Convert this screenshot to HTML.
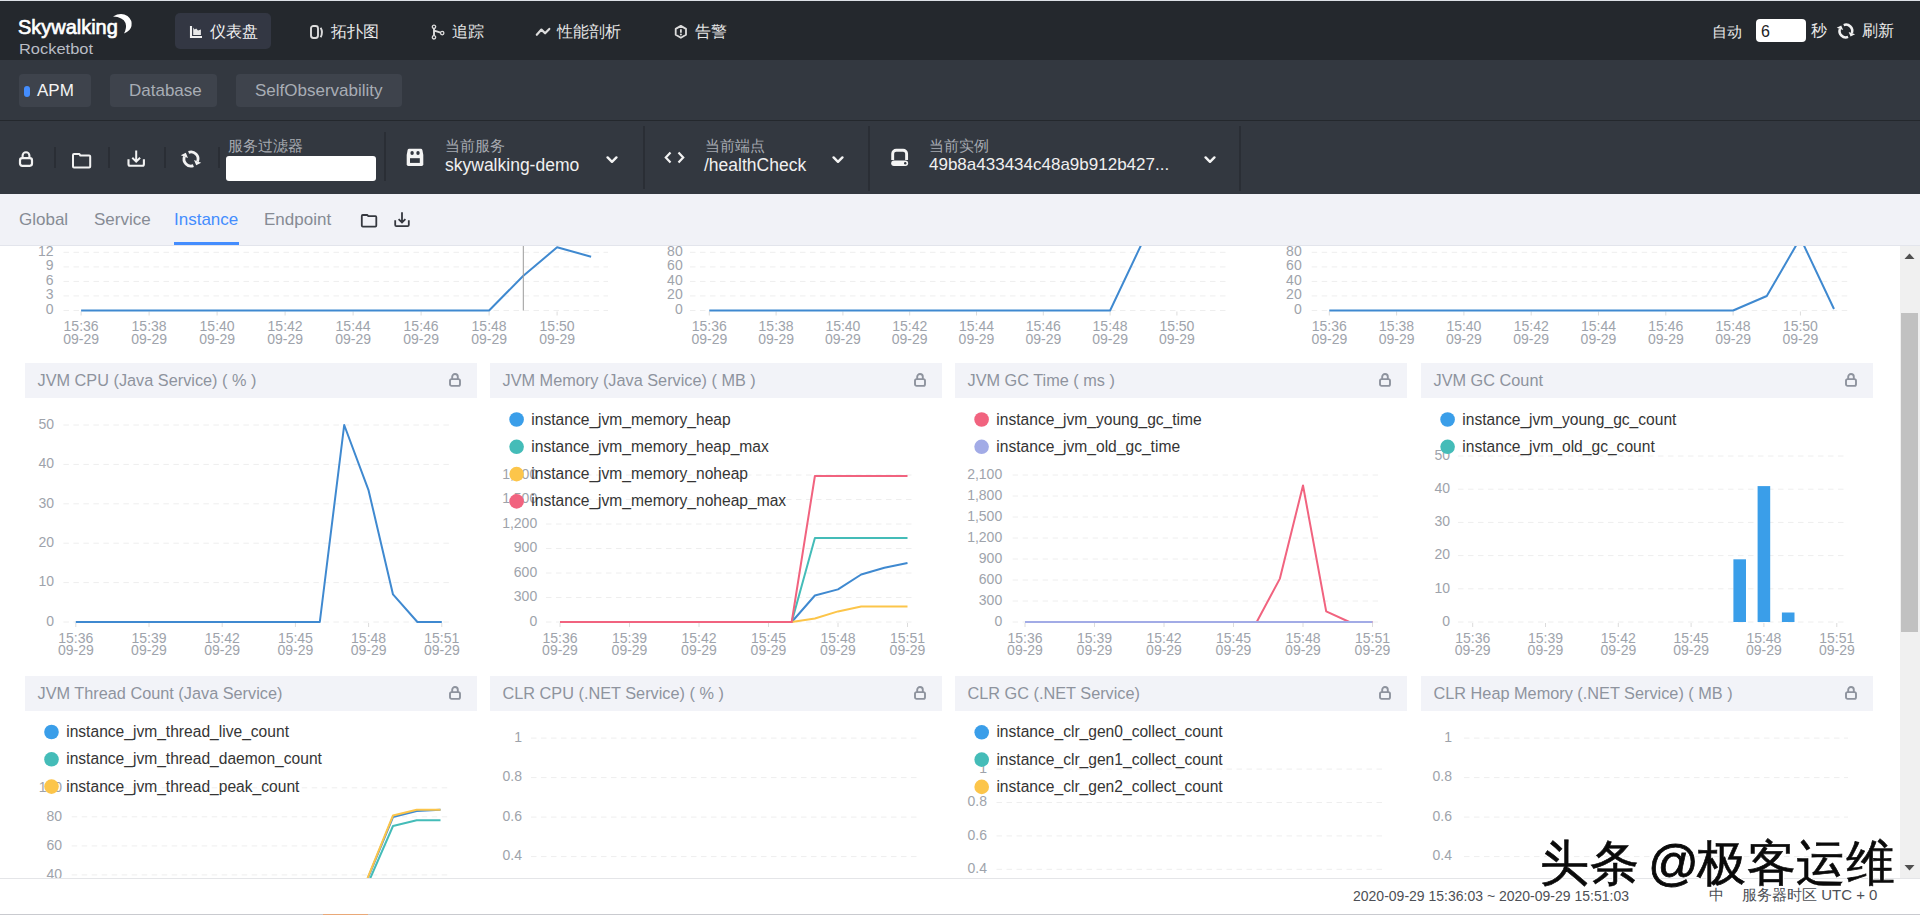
<!DOCTYPE html>
<html><head><meta charset="utf-8">
<style>
*{box-sizing:border-box}
html,body{margin:0;padding:0}
body{width:1920px;height:915px;overflow:hidden;position:relative;background:#fff;font-family:"Liberation Sans",sans-serif}
.a{position:absolute;white-space:nowrap}
#top{position:absolute;left:0;top:0;width:1920px;height:60px;background:#24282d}
#topline{position:absolute;left:0;top:0;width:1920px;height:1px;background:#dde1e6}
#bar2{position:absolute;left:0;top:60px;width:1920px;height:61px;background:#333840;border-bottom:1px solid #24282d}
#tool{position:absolute;left:0;top:121px;width:1920px;height:73px;background:#333840}
#tabs{position:absolute;left:0;top:194px;width:1920px;height:52px;background:#f1f2f7;border-bottom:1px solid #e3e5ec}
.nav{color:#e6e6e6;font-size:16px;line-height:16px;top:24px}
.mtab{top:74px;height:33px;border-radius:4px;background:#3e434c;color:#a8adb5;font-size:17px;line-height:33px}
.sep{position:absolute;width:2px;background:#2a2e35}
.lbl{color:#a6aab1;font-size:15px;line-height:15px}
.val{color:#f0f0f0;font-size:17.5px;line-height:18px;margin-top:1px}
.ttab{top:211px;font-size:17px;line-height:17px;color:#868b94}
#foot{position:absolute;left:0;top:878px;width:1920px;height:37px;background:#fff;border-top:1px solid #e4e5e8;border-bottom:1px solid #c9cacf}
</style></head>
<body>
<div id="top"></div><div id="topline"></div>
<div class="a" style="left:18px;top:15px;color:#fff;font-size:21px;line-height:23px;font-weight:normal;-webkit-text-stroke:0.7px #fff;transform-origin:0 0;transform:scaleX(0.95)">Skywalking</div>
<svg class="a" style="left:108px;top:11px" width="26" height="26" viewBox="0 0 26 26"><path d="M5 5.5Q13 1 19.5 5Q24.5 9 23.5 15Q22.5 20 16 22.5Q19 17 17.5 12Q15 6 5 5.5Z" fill="#fff"/></svg>
<div class="a" style="left:19px;top:42px;color:#b9bdc5;font-size:14.3px;line-height:15px;transform-origin:0 0;transform:scaleX(1.15)">Rocketbot</div>
<div class="a" style="left:175px;top:13px;width:96px;height:36px;border-radius:5px;background:#333743"></div>
<svg class="a" style="left:189px;top:25px" width="14" height="14" viewBox="0 0 14 14"><path d="M2 1V12H13" stroke="#f0f0f0" stroke-width="2.1" fill="none"/><path d="M4.2 10V2.6L5.6 4.6L7.2 3.6L9 5.6L11.9 4.6V10Z" fill="#e8e8e8"/></svg>
<div class="a nav" style="left:210px;color:#f2f2f2">仪表盘</div>
<svg class="a" style="left:309px;top:25px" width="16" height="15" viewBox="0 0 16 15"><rect x="2" y="1" width="7" height="12" rx="2.4" stroke="#dcdcdc" stroke-width="1.9" fill="none"/><path d="M11.6 2.7Q14.4 7.2 11.6 12.2" stroke="#dcdcdc" stroke-width="1.9" fill="none"/></svg>
<div class="a nav" style="left:331px">拓扑图</div>
<svg class="a" style="left:430px;top:24px" width="16" height="16" viewBox="0 0 16 16"><circle cx="4" cy="2.8" r="1.7" stroke="#dcdcdc" stroke-width="1.3" fill="none"/><circle cx="4" cy="13.3" r="1.7" stroke="#dcdcdc" stroke-width="1.3" fill="none"/><circle cx="12.2" cy="9.1" r="1.7" stroke="#dcdcdc" stroke-width="1.3" fill="none"/><path d="M4 4.4V11.7M4.3 6.6L10.6 8.7" stroke="#dcdcdc" stroke-width="1.9" fill="none"/></svg>
<div class="a nav" style="left:452px">追踪</div>
<svg class="a" style="left:535px;top:25px" width="16" height="14" viewBox="0 0 16 14"><path d="M1.8 9.8L6.4 4.6L10.1 8.3L14.3 3.9" stroke="#dcdcdc" stroke-width="2.2" fill="none" stroke-linecap="round" stroke-linejoin="round"/></svg>
<div class="a nav" style="left:557px">性能剖析</div>
<svg class="a" style="left:673px;top:24px" width="16" height="16" viewBox="0 0 16 16"><path d="M7.85 1.9L13 4.9V10.8L7.85 13.8L2.7 10.8V4.9Z" stroke="#dcdcdc" stroke-width="1.8" fill="none" stroke-linejoin="round"/><path d="M7.9 5.2V8.7" stroke="#dcdcdc" stroke-width="1.8"/><circle cx="7.9" cy="10.5" r="1" fill="#dcdcdc"/></svg>
<div class="a nav" style="left:695px">告警</div>
<div class="a" style="left:1712px;top:24px;color:#eaeaea;font-size:14.5px;line-height:16px">自动</div>
<div class="a" style="left:1756px;top:19px;width:50px;height:23px;border-radius:4px;background:#fff;color:#222;font-size:16px;line-height:25px;padding-left:5px">6</div>
<div class="a" style="left:1811px;top:23px;color:#eaeaea;font-size:16px;line-height:16px">秒</div>
<svg class="a" style="left:1836px;top:22px" width="19.8" height="18.0" viewBox="0 0 22 20"><path d="M8.6 3.4A7 7 0 0 1 17.6 12.4M13.4 16.6A7 7 0 0 1 4.4 7.6" stroke="#f0f0f0" stroke-width="2.8" fill="none"/><path d="M21.2 13.7L14 11.1L16.2 16.2Z M0.8 6.3L8 8.9L5.8 3.8Z" fill="#f0f0f0"/></svg>
<div class="a" style="left:1862px;top:23px;color:#eaeaea;font-size:15.5px;line-height:16px">刷新</div>

<div id="bar2"></div>
<div class="a mtab" style="left:19px;width:72px;color:#f4f4f4;padding-left:18px">APM</div>
<div class="a" style="left:24px;top:86px;width:6px;height:11px;border-radius:3px;background:#448dfe"></div>
<div class="a mtab" style="left:110px;width:107px;padding-left:19px">Database</div>
<div class="a mtab" style="left:236px;width:166px;padding-left:19px">SelfObservability</div>

<div id="tool"></div>
<svg class="a" style="left:18px;top:150px" width="16" height="18" viewBox="0 0 16 18"><path d="M4.6 8.3V5.6a3.4 3.4 0 0 1 6.8 0V8.3" stroke="#f2f2f2" stroke-width="2.1" fill="none"/><rect x="2" y="8.2" width="12" height="7.6" rx="2.2" stroke="#f2f2f2" stroke-width="2.2" fill="none"/></svg>
<div class="sep" style="left:54px;top:147px;height:21px"></div>
<svg class="a" style="left:71px;top:152px" width="21" height="17" viewBox="0 0 21 17"><path d="M2 14.6V3Q2 2 3 2H8.4L9.4 3.6H18.2Q19.2 3.6 19.2 4.6V14.6Q19.2 15.6 18.2 15.6H3Q2 15.6 2 14.6Z" stroke="#f2f2f2" stroke-width="2" fill="none" stroke-linejoin="round"/></svg>
<div class="sep" style="left:108px;top:147px;height:21px"></div>
<svg class="a" style="left:126px;top:149px" width="20" height="19" viewBox="0 0 20 19"><path d="M2.5 10.3V15.2Q2.5 16.7 4 16.7H16.4Q17.9 16.7 17.9 15.2V10.3" stroke="#f2f2f2" stroke-width="2.1" fill="none"/><path d="M10.2 1.4V12.6M6.3 8.8L10.2 12.6L14.1 8.8" stroke="#f2f2f2" stroke-width="2" fill="none"/></svg>
<div class="sep" style="left:164px;top:147px;height:21px"></div>
<svg class="a" style="left:180px;top:149px" width="22.0" height="20.0" viewBox="0 0 22 20"><path d="M8.6 3.4A7 7 0 0 1 17.6 12.4M13.4 16.6A7 7 0 0 1 4.4 7.6" stroke="#f2f2f2" stroke-width="2.8" fill="none"/><path d="M21.2 13.7L14 11.1L16.2 16.2Z M0.8 6.3L8 8.9L5.8 3.8Z" fill="#f2f2f2"/></svg>
<div class="sep" style="left:218px;top:147px;height:21px"></div>
<div class="a lbl" style="left:228px;top:138px">服务过滤器</div>
<div class="a" style="left:226px;top:156px;width:150px;height:25px;border-radius:3px;background:#fff"></div>
<div class="sep" style="left:384px;top:132px;height:49px"></div>
<svg class="a" style="left:406px;top:148px" width="18" height="19" viewBox="0 0 18 19"><path d="M3.2 0.7H14.8Q16 0.7 16.4 2L17.3 7V16.3Q17.3 17.9 15.7 17.9H2.3Q0.7 17.9 0.7 16.3V7L1.6 2Q2 0.7 3.2 0.7Z" fill="#f4f4f4"/><ellipse cx="6.1" cy="5" rx="1.7" ry="2" fill="#333840"/><ellipse cx="12" cy="5" rx="1.7" ry="2" fill="#333840"/><rect x="4" y="10.2" width="9.8" height="4.7" fill="#333840"/></svg>
<div class="a lbl" style="left:445px;top:138px">当前服务</div>
<div class="a val" style="left:445px;top:155px">skywalking-demo</div>
<svg class="a" style="left:605px;top:154px" width="13" height="10" viewBox="0 0 13 10"><path d="M2.6 3.4L7 7.8L11.4 3.4" stroke="#f4f4f4" stroke-width="2.4" fill="none" stroke-linecap="round" stroke-linejoin="round"/></svg>
<div class="sep" style="left:643px;top:126px;height:63px"></div>
<svg class="a" style="left:664px;top:151px" width="21" height="13" viewBox="0 0 21 13"><path d="M6.5 1.5L1.8 6.5L6.5 11.5M14.5 1.5L19.2 6.5L14.5 11.5" stroke="#f2f2f2" stroke-width="2.2" fill="none"/></svg>
<div class="a lbl" style="left:705px;top:138px">当前端点</div>
<div class="a val" style="left:704px;top:155px">/healthCheck</div>
<svg class="a" style="left:831px;top:154px" width="13" height="10" viewBox="0 0 13 10"><path d="M2.6 3.4L7 7.8L11.4 3.4" stroke="#f4f4f4" stroke-width="2.4" fill="none" stroke-linecap="round" stroke-linejoin="round"/></svg>
<div class="sep" style="left:868px;top:126px;height:65px"></div>
<svg class="a" style="left:889px;top:148px" width="21" height="20" viewBox="0 0 21 20"><path d="M3.7 12V5.8A3.5 3.5 0 0 1 7.2 2.3H14.1A3.5 3.5 0 0 1 17.6 5.8V12" stroke="#f4f4f4" stroke-width="2.9" fill="none"/><rect x="2.2" y="12.6" width="16.9" height="5.4" rx="2.7" fill="#f4f4f4"/><circle cx="16.2" cy="15.2" r="1.2" fill="#333840"/></svg>
<div class="a lbl" style="left:929px;top:138px">当前实例</div>
<div class="a val" style="left:929px;top:155px;font-size:17px">49b8a433434c48a9b912b427...</div>
<svg class="a" style="left:1203px;top:154px" width="13" height="10" viewBox="0 0 13 10"><path d="M2.6 3.4L7 7.8L11.4 3.4" stroke="#f4f4f4" stroke-width="2.4" fill="none" stroke-linecap="round" stroke-linejoin="round"/></svg>
<div class="sep" style="left:1239px;top:126px;height:65px"></div>
<div id="tabs"></div>
<div class="a ttab" style="left:19px">Global</div>
<div class="a ttab" style="left:94px">Service</div>
<div class="a ttab" style="left:174px;color:#448dfe">Instance</div>
<div class="a" style="left:174px;top:242px;width:65px;height:3px;background:#448dfe"></div>
<div class="a ttab" style="left:264px">Endpoint</div>
<svg class="a" style="left:360px;top:213px" width="18" height="15" viewBox="0 0 18 15"><path d="M1.8 12.6V3Q1.8 2 2.8 2H7.4L8.3 3.2H15.4Q16.3 3.2 16.3 4.2V12.6Q16.3 13.6 15.3 13.6H2.8Q1.8 13.6 1.8 12.6Z" stroke="#35383f" stroke-width="1.8" fill="none" stroke-linejoin="round"/></svg>
<svg class="a" style="left:393px;top:211px" width="18" height="17" viewBox="0 0 18 17"><path d="M2.2 9.3V14Q2.2 15.2 3.4 15.2H14.6Q15.8 15.2 15.8 14V9.3" stroke="#35383f" stroke-width="1.8" fill="none"/><path d="M9 1.3V11.4M5.6 8.2L9 11.4L12.4 8.2" stroke="#35383f" stroke-width="1.8" fill="none"/></svg>
<!--CHARTS--><svg class="a" style="left:0;top:246px" width="1900" height="632" viewBox="0 246 1900 632" font-family="Liberation Sans, sans-serif"><line x1="63.5" y1="310.5" x2="608" y2="310.5" stroke="#eeeeee" stroke-dasharray="5.5 4.5"/>
<line x1="63.5" y1="295.9" x2="608" y2="295.9" stroke="#eeeeee" stroke-dasharray="5.5 4.5"/>
<line x1="63.5" y1="281.4" x2="608" y2="281.4" stroke="#eeeeee" stroke-dasharray="5.5 4.5"/>
<line x1="63.5" y1="266.9" x2="608" y2="266.9" stroke="#eeeeee" stroke-dasharray="5.5 4.5"/>
<line x1="63.5" y1="252.3" x2="608" y2="252.3" stroke="#eeeeee" stroke-dasharray="5.5 4.5"/>
<text x="53.6" y="313.8" text-anchor="end" font-size="14" fill="#9ea3ab" >0</text>
<text x="53.6" y="299.2" text-anchor="end" font-size="14" fill="#9ea3ab" >3</text>
<text x="53.6" y="284.7" text-anchor="end" font-size="14" fill="#9ea3ab" >6</text>
<text x="53.6" y="270.2" text-anchor="end" font-size="14" fill="#9ea3ab" >9</text>
<text x="53.6" y="255.6" text-anchor="end" font-size="14" fill="#9ea3ab" >12</text>
<text x="81.1" y="331.0" text-anchor="middle" font-size="14" fill="#9ea3ab" >15:36</text>
<text x="81.1" y="343.5" text-anchor="middle" font-size="14" fill="#9ea3ab" >09-29</text>
<line x1="81.1" y1="311.5" x2="81.1" y2="315.5" stroke="#dcdcdc"/>
<text x="149.1" y="331.0" text-anchor="middle" font-size="14" fill="#9ea3ab" >15:38</text>
<text x="149.1" y="343.5" text-anchor="middle" font-size="14" fill="#9ea3ab" >09-29</text>
<line x1="149.1" y1="311.5" x2="149.1" y2="315.5" stroke="#dcdcdc"/>
<text x="217.1" y="331.0" text-anchor="middle" font-size="14" fill="#9ea3ab" >15:40</text>
<text x="217.1" y="343.5" text-anchor="middle" font-size="14" fill="#9ea3ab" >09-29</text>
<line x1="217.1" y1="311.5" x2="217.1" y2="315.5" stroke="#dcdcdc"/>
<text x="285.1" y="331.0" text-anchor="middle" font-size="14" fill="#9ea3ab" >15:42</text>
<text x="285.1" y="343.5" text-anchor="middle" font-size="14" fill="#9ea3ab" >09-29</text>
<line x1="285.1" y1="311.5" x2="285.1" y2="315.5" stroke="#dcdcdc"/>
<text x="353.1" y="331.0" text-anchor="middle" font-size="14" fill="#9ea3ab" >15:44</text>
<text x="353.1" y="343.5" text-anchor="middle" font-size="14" fill="#9ea3ab" >09-29</text>
<line x1="353.1" y1="311.5" x2="353.1" y2="315.5" stroke="#dcdcdc"/>
<text x="421.1" y="331.0" text-anchor="middle" font-size="14" fill="#9ea3ab" >15:46</text>
<text x="421.1" y="343.5" text-anchor="middle" font-size="14" fill="#9ea3ab" >09-29</text>
<line x1="421.1" y1="311.5" x2="421.1" y2="315.5" stroke="#dcdcdc"/>
<text x="489.1" y="331.0" text-anchor="middle" font-size="14" fill="#9ea3ab" >15:48</text>
<text x="489.1" y="343.5" text-anchor="middle" font-size="14" fill="#9ea3ab" >09-29</text>
<line x1="489.1" y1="311.5" x2="489.1" y2="315.5" stroke="#dcdcdc"/>
<text x="557.1" y="331.0" text-anchor="middle" font-size="14" fill="#9ea3ab" >15:50</text>
<text x="557.1" y="343.5" text-anchor="middle" font-size="14" fill="#9ea3ab" >09-29</text>
<line x1="557.1" y1="311.5" x2="557.1" y2="315.5" stroke="#dcdcdc"/>
<polyline points="81.1,310.5 115.1,310.5 149.1,310.5 183.1,310.5 217.1,310.5 251.1,310.5 285.1,310.5 319.1,310.5 353.1,310.5 387.1,310.5 421.1,310.5 455.1,310.5 489.1,310.5 523.1,276.0 557.1,247.3 591.1,256.7" fill="none" stroke="#3f89d0" stroke-width="2" stroke-linejoin="round"/>
<line x1="523.3" y1="246" x2="523.3" y2="310.5" stroke="#9a9a9a" stroke-width="1"/>
<line x1="690" y1="310.5" x2="1228" y2="310.5" stroke="#eeeeee" stroke-dasharray="5.5 4.5"/>
<line x1="690" y1="295.9" x2="1228" y2="295.9" stroke="#eeeeee" stroke-dasharray="5.5 4.5"/>
<line x1="690" y1="281.4" x2="1228" y2="281.4" stroke="#eeeeee" stroke-dasharray="5.5 4.5"/>
<line x1="690" y1="266.9" x2="1228" y2="266.9" stroke="#eeeeee" stroke-dasharray="5.5 4.5"/>
<line x1="690" y1="252.3" x2="1228" y2="252.3" stroke="#eeeeee" stroke-dasharray="5.5 4.5"/>
<text x="682.7" y="313.8" text-anchor="end" font-size="14" fill="#9ea3ab" >0</text>
<text x="682.7" y="299.2" text-anchor="end" font-size="14" fill="#9ea3ab" >20</text>
<text x="682.7" y="284.7" text-anchor="end" font-size="14" fill="#9ea3ab" >40</text>
<text x="682.7" y="270.2" text-anchor="end" font-size="14" fill="#9ea3ab" >60</text>
<text x="682.7" y="255.6" text-anchor="end" font-size="14" fill="#9ea3ab" >80</text>
<text x="709.3" y="331.0" text-anchor="middle" font-size="14" fill="#9ea3ab" >15:36</text>
<text x="709.3" y="343.5" text-anchor="middle" font-size="14" fill="#9ea3ab" >09-29</text>
<line x1="709.3" y1="311.5" x2="709.3" y2="315.5" stroke="#dcdcdc"/>
<text x="776.1" y="331.0" text-anchor="middle" font-size="14" fill="#9ea3ab" >15:38</text>
<text x="776.1" y="343.5" text-anchor="middle" font-size="14" fill="#9ea3ab" >09-29</text>
<line x1="776.1" y1="311.5" x2="776.1" y2="315.5" stroke="#dcdcdc"/>
<text x="842.9" y="331.0" text-anchor="middle" font-size="14" fill="#9ea3ab" >15:40</text>
<text x="842.9" y="343.5" text-anchor="middle" font-size="14" fill="#9ea3ab" >09-29</text>
<line x1="842.9" y1="311.5" x2="842.9" y2="315.5" stroke="#dcdcdc"/>
<text x="909.7" y="331.0" text-anchor="middle" font-size="14" fill="#9ea3ab" >15:42</text>
<text x="909.7" y="343.5" text-anchor="middle" font-size="14" fill="#9ea3ab" >09-29</text>
<line x1="909.7" y1="311.5" x2="909.7" y2="315.5" stroke="#dcdcdc"/>
<text x="976.5" y="331.0" text-anchor="middle" font-size="14" fill="#9ea3ab" >15:44</text>
<text x="976.5" y="343.5" text-anchor="middle" font-size="14" fill="#9ea3ab" >09-29</text>
<line x1="976.5" y1="311.5" x2="976.5" y2="315.5" stroke="#dcdcdc"/>
<text x="1043.3" y="331.0" text-anchor="middle" font-size="14" fill="#9ea3ab" >15:46</text>
<text x="1043.3" y="343.5" text-anchor="middle" font-size="14" fill="#9ea3ab" >09-29</text>
<line x1="1043.3" y1="311.5" x2="1043.3" y2="315.5" stroke="#dcdcdc"/>
<text x="1110.1" y="331.0" text-anchor="middle" font-size="14" fill="#9ea3ab" >15:48</text>
<text x="1110.1" y="343.5" text-anchor="middle" font-size="14" fill="#9ea3ab" >09-29</text>
<line x1="1110.1" y1="311.5" x2="1110.1" y2="315.5" stroke="#dcdcdc"/>
<text x="1176.9" y="331.0" text-anchor="middle" font-size="14" fill="#9ea3ab" >15:50</text>
<text x="1176.9" y="343.5" text-anchor="middle" font-size="14" fill="#9ea3ab" >09-29</text>
<line x1="1176.9" y1="311.5" x2="1176.9" y2="315.5" stroke="#dcdcdc"/>
<polyline points="709.3,310.5 742.7,310.5 776.1,310.5 809.5,310.5 842.9,310.5 876.3,310.5 909.7,310.5 943.1,310.5 976.5,310.5 1009.9,310.5 1043.3,310.5 1076.7,310.5 1110.1,310.5 1143.5,240.0 1176.9,200.0 1210.3,200.0" fill="none" stroke="#3f89d0" stroke-width="2" stroke-linejoin="round"/>
<line x1="1311.7" y1="310.5" x2="1848" y2="310.5" stroke="#eeeeee" stroke-dasharray="5.5 4.5"/>
<line x1="1311.7" y1="295.9" x2="1848" y2="295.9" stroke="#eeeeee" stroke-dasharray="5.5 4.5"/>
<line x1="1311.7" y1="281.4" x2="1848" y2="281.4" stroke="#eeeeee" stroke-dasharray="5.5 4.5"/>
<line x1="1311.7" y1="266.9" x2="1848" y2="266.9" stroke="#eeeeee" stroke-dasharray="5.5 4.5"/>
<line x1="1311.7" y1="252.3" x2="1848" y2="252.3" stroke="#eeeeee" stroke-dasharray="5.5 4.5"/>
<text x="1301.7" y="313.8" text-anchor="end" font-size="14" fill="#9ea3ab" >0</text>
<text x="1301.7" y="299.2" text-anchor="end" font-size="14" fill="#9ea3ab" >20</text>
<text x="1301.7" y="284.7" text-anchor="end" font-size="14" fill="#9ea3ab" >40</text>
<text x="1301.7" y="270.2" text-anchor="end" font-size="14" fill="#9ea3ab" >60</text>
<text x="1301.7" y="255.6" text-anchor="end" font-size="14" fill="#9ea3ab" >80</text>
<text x="1329.3" y="331.0" text-anchor="middle" font-size="14" fill="#9ea3ab" >15:36</text>
<text x="1329.3" y="343.5" text-anchor="middle" font-size="14" fill="#9ea3ab" >09-29</text>
<line x1="1329.3" y1="311.5" x2="1329.3" y2="315.5" stroke="#dcdcdc"/>
<text x="1396.6" y="331.0" text-anchor="middle" font-size="14" fill="#9ea3ab" >15:38</text>
<text x="1396.6" y="343.5" text-anchor="middle" font-size="14" fill="#9ea3ab" >09-29</text>
<line x1="1396.6" y1="311.5" x2="1396.6" y2="315.5" stroke="#dcdcdc"/>
<text x="1463.9" y="331.0" text-anchor="middle" font-size="14" fill="#9ea3ab" >15:40</text>
<text x="1463.9" y="343.5" text-anchor="middle" font-size="14" fill="#9ea3ab" >09-29</text>
<line x1="1463.9" y1="311.5" x2="1463.9" y2="315.5" stroke="#dcdcdc"/>
<text x="1531.2" y="331.0" text-anchor="middle" font-size="14" fill="#9ea3ab" >15:42</text>
<text x="1531.2" y="343.5" text-anchor="middle" font-size="14" fill="#9ea3ab" >09-29</text>
<line x1="1531.2" y1="311.5" x2="1531.2" y2="315.5" stroke="#dcdcdc"/>
<text x="1598.5" y="331.0" text-anchor="middle" font-size="14" fill="#9ea3ab" >15:44</text>
<text x="1598.5" y="343.5" text-anchor="middle" font-size="14" fill="#9ea3ab" >09-29</text>
<line x1="1598.5" y1="311.5" x2="1598.5" y2="315.5" stroke="#dcdcdc"/>
<text x="1665.8" y="331.0" text-anchor="middle" font-size="14" fill="#9ea3ab" >15:46</text>
<text x="1665.8" y="343.5" text-anchor="middle" font-size="14" fill="#9ea3ab" >09-29</text>
<line x1="1665.8" y1="311.5" x2="1665.8" y2="315.5" stroke="#dcdcdc"/>
<text x="1733.1" y="331.0" text-anchor="middle" font-size="14" fill="#9ea3ab" >15:48</text>
<text x="1733.1" y="343.5" text-anchor="middle" font-size="14" fill="#9ea3ab" >09-29</text>
<line x1="1733.1" y1="311.5" x2="1733.1" y2="315.5" stroke="#dcdcdc"/>
<text x="1800.4" y="331.0" text-anchor="middle" font-size="14" fill="#9ea3ab" >15:50</text>
<text x="1800.4" y="343.5" text-anchor="middle" font-size="14" fill="#9ea3ab" >09-29</text>
<line x1="1800.4" y1="311.5" x2="1800.4" y2="315.5" stroke="#dcdcdc"/>
<polyline points="1329.3,310.5 1363.0,310.5 1396.6,310.5 1430.2,310.5 1463.9,310.5 1497.5,310.5 1531.2,310.5 1564.8,310.5 1598.5,310.5 1632.1,310.5 1665.8,310.5 1699.4,310.5 1733.1,310.5 1766.8,296.0 1800.4,238.0 1834.0,309.0" fill="none" stroke="#3f89d0" stroke-width="2" stroke-linejoin="round"/>
<rect x="25" y="363" width="452" height="35" fill="#f2f3f8"/>
<text x="37.5" y="385.6" text-anchor="start" font-size="16.3" fill="#8e939e" >JVM CPU (Java Service) ( % )</text>
<g transform="translate(449,373)"><path d="M3.2 6.2V3.8a2.8 2.8 0 0 1 5.6 0V6.2" stroke="#8e939e" stroke-width="1.9" fill="none"/><rect x="1" y="6.1" width="10" height="6.8" rx="1.6" stroke="#8e939e" stroke-width="1.9" fill="none"/></g>
<rect x="490" y="363" width="452" height="35" fill="#f2f3f8"/>
<text x="502.5" y="385.6" text-anchor="start" font-size="16.3" fill="#8e939e" >JVM Memory (Java Service) ( MB )</text>
<g transform="translate(914,373)"><path d="M3.2 6.2V3.8a2.8 2.8 0 0 1 5.6 0V6.2" stroke="#8e939e" stroke-width="1.9" fill="none"/><rect x="1" y="6.1" width="10" height="6.8" rx="1.6" stroke="#8e939e" stroke-width="1.9" fill="none"/></g>
<rect x="955" y="363" width="452" height="35" fill="#f2f3f8"/>
<text x="967.5" y="385.6" text-anchor="start" font-size="16.3" fill="#8e939e" >JVM GC Time ( ms )</text>
<g transform="translate(1379,373)"><path d="M3.2 6.2V3.8a2.8 2.8 0 0 1 5.6 0V6.2" stroke="#8e939e" stroke-width="1.9" fill="none"/><rect x="1" y="6.1" width="10" height="6.8" rx="1.6" stroke="#8e939e" stroke-width="1.9" fill="none"/></g>
<rect x="1421" y="363" width="452" height="35" fill="#f2f3f8"/>
<text x="1433.5" y="385.6" text-anchor="start" font-size="16.3" fill="#8e939e" >JVM GC Count</text>
<g transform="translate(1845,373)"><path d="M3.2 6.2V3.8a2.8 2.8 0 0 1 5.6 0V6.2" stroke="#8e939e" stroke-width="1.9" fill="none"/><rect x="1" y="6.1" width="10" height="6.8" rx="1.6" stroke="#8e939e" stroke-width="1.9" fill="none"/></g>
<line x1="63.4" y1="622.0" x2="449" y2="622.0" stroke="#eeeeee" stroke-dasharray="5.5 4.5"/>
<line x1="63.4" y1="582.6" x2="449" y2="582.6" stroke="#eeeeee" stroke-dasharray="5.5 4.5"/>
<line x1="63.4" y1="543.2" x2="449" y2="543.2" stroke="#eeeeee" stroke-dasharray="5.5 4.5"/>
<line x1="63.4" y1="503.8" x2="449" y2="503.8" stroke="#eeeeee" stroke-dasharray="5.5 4.5"/>
<line x1="63.4" y1="464.4" x2="449" y2="464.4" stroke="#eeeeee" stroke-dasharray="5.5 4.5"/>
<line x1="63.4" y1="425.0" x2="449" y2="425.0" stroke="#eeeeee" stroke-dasharray="5.5 4.5"/>
<text x="54.0" y="625.7" text-anchor="end" font-size="14" fill="#9ea3ab" >0</text>
<text x="54.0" y="586.3" text-anchor="end" font-size="14" fill="#9ea3ab" >10</text>
<text x="54.0" y="546.9" text-anchor="end" font-size="14" fill="#9ea3ab" >20</text>
<text x="54.0" y="507.5" text-anchor="end" font-size="14" fill="#9ea3ab" >30</text>
<text x="54.0" y="468.1" text-anchor="end" font-size="14" fill="#9ea3ab" >40</text>
<text x="54.0" y="428.7" text-anchor="end" font-size="14" fill="#9ea3ab" >50</text>
<text x="75.8" y="642.5" text-anchor="middle" font-size="14" fill="#9ea3ab" >15:36</text>
<text x="75.8" y="655.0" text-anchor="middle" font-size="14" fill="#9ea3ab" >09-29</text>
<line x1="75.8" y1="623" x2="75.8" y2="627" stroke="#dcdcdc"/>
<text x="149.0" y="642.5" text-anchor="middle" font-size="14" fill="#9ea3ab" >15:39</text>
<text x="149.0" y="655.0" text-anchor="middle" font-size="14" fill="#9ea3ab" >09-29</text>
<line x1="149.0" y1="623" x2="149.0" y2="627" stroke="#dcdcdc"/>
<text x="222.2" y="642.5" text-anchor="middle" font-size="14" fill="#9ea3ab" >15:42</text>
<text x="222.2" y="655.0" text-anchor="middle" font-size="14" fill="#9ea3ab" >09-29</text>
<line x1="222.2" y1="623" x2="222.2" y2="627" stroke="#dcdcdc"/>
<text x="295.4" y="642.5" text-anchor="middle" font-size="14" fill="#9ea3ab" >15:45</text>
<text x="295.4" y="655.0" text-anchor="middle" font-size="14" fill="#9ea3ab" >09-29</text>
<line x1="295.4" y1="623" x2="295.4" y2="627" stroke="#dcdcdc"/>
<text x="368.6" y="642.5" text-anchor="middle" font-size="14" fill="#9ea3ab" >15:48</text>
<text x="368.6" y="655.0" text-anchor="middle" font-size="14" fill="#9ea3ab" >09-29</text>
<line x1="368.6" y1="623" x2="368.6" y2="627" stroke="#dcdcdc"/>
<text x="441.8" y="642.5" text-anchor="middle" font-size="14" fill="#9ea3ab" >15:51</text>
<text x="441.8" y="655.0" text-anchor="middle" font-size="14" fill="#9ea3ab" >09-29</text>
<line x1="441.8" y1="623" x2="441.8" y2="627" stroke="#dcdcdc"/>
<polyline points="75.8,622.0 100.2,622.0 124.6,622.0 149.0,622.0 173.4,622.0 197.8,622.0 222.2,622.0 246.6,622.0 271.0,622.0 295.4,622.0 319.8,622.0 344.2,425.0 368.6,490.4 393.0,594.4 417.4,622.0 441.8,622.0" fill="none" stroke="#3f89d0" stroke-width="2" stroke-linejoin="round"/>
<line x1="546" y1="622.0" x2="913.6" y2="622.0" stroke="#eeeeee" stroke-dasharray="5.5 4.5"/>
<line x1="546" y1="597.5" x2="913.6" y2="597.5" stroke="#eeeeee" stroke-dasharray="5.5 4.5"/>
<line x1="546" y1="573.0" x2="913.6" y2="573.0" stroke="#eeeeee" stroke-dasharray="5.5 4.5"/>
<line x1="546" y1="548.5" x2="913.6" y2="548.5" stroke="#eeeeee" stroke-dasharray="5.5 4.5"/>
<line x1="546" y1="524.0" x2="913.6" y2="524.0" stroke="#eeeeee" stroke-dasharray="5.5 4.5"/>
<line x1="546" y1="499.5" x2="913.6" y2="499.5" stroke="#eeeeee" stroke-dasharray="5.5 4.5"/>
<line x1="546" y1="475.0" x2="913.6" y2="475.0" stroke="#eeeeee" stroke-dasharray="5.5 4.5"/>
<text x="537.2" y="625.7" text-anchor="end" font-size="14" fill="#9ea3ab" >0</text>
<text x="537.2" y="601.2" text-anchor="end" font-size="14" fill="#9ea3ab" >300</text>
<text x="537.2" y="576.7" text-anchor="end" font-size="14" fill="#9ea3ab" >600</text>
<text x="537.2" y="552.2" text-anchor="end" font-size="14" fill="#9ea3ab" >900</text>
<text x="537.2" y="527.7" text-anchor="end" font-size="14" fill="#9ea3ab" >1,200</text>
<text x="537.2" y="503.2" text-anchor="end" font-size="14" fill="#9ea3ab" >1,500</text>
<text x="537.2" y="478.7" text-anchor="end" font-size="14" fill="#9ea3ab" >1,800</text>
<text x="560.0" y="642.5" text-anchor="middle" font-size="14" fill="#9ea3ab" >15:36</text>
<text x="560.0" y="655.0" text-anchor="middle" font-size="14" fill="#9ea3ab" >09-29</text>
<line x1="560.0" y1="623" x2="560.0" y2="627" stroke="#dcdcdc"/>
<text x="629.5" y="642.5" text-anchor="middle" font-size="14" fill="#9ea3ab" >15:39</text>
<text x="629.5" y="655.0" text-anchor="middle" font-size="14" fill="#9ea3ab" >09-29</text>
<line x1="629.5" y1="623" x2="629.5" y2="627" stroke="#dcdcdc"/>
<text x="699.0" y="642.5" text-anchor="middle" font-size="14" fill="#9ea3ab" >15:42</text>
<text x="699.0" y="655.0" text-anchor="middle" font-size="14" fill="#9ea3ab" >09-29</text>
<line x1="699.0" y1="623" x2="699.0" y2="627" stroke="#dcdcdc"/>
<text x="768.5" y="642.5" text-anchor="middle" font-size="14" fill="#9ea3ab" >15:45</text>
<text x="768.5" y="655.0" text-anchor="middle" font-size="14" fill="#9ea3ab" >09-29</text>
<line x1="768.5" y1="623" x2="768.5" y2="627" stroke="#dcdcdc"/>
<text x="838.0" y="642.5" text-anchor="middle" font-size="14" fill="#9ea3ab" >15:48</text>
<text x="838.0" y="655.0" text-anchor="middle" font-size="14" fill="#9ea3ab" >09-29</text>
<line x1="838.0" y1="623" x2="838.0" y2="627" stroke="#dcdcdc"/>
<text x="907.5" y="642.5" text-anchor="middle" font-size="14" fill="#9ea3ab" >15:51</text>
<text x="907.5" y="655.0" text-anchor="middle" font-size="14" fill="#9ea3ab" >09-29</text>
<line x1="907.5" y1="623" x2="907.5" y2="627" stroke="#dcdcdc"/>
<polyline points="560.0,622.0 583.2,622.0 606.3,622.0 629.5,622.0 652.7,622.0 675.9,622.0 699.0,622.0 722.2,622.0 745.4,622.0 768.5,622.0 791.7,622.0 814.9,595.5 838.0,589.4 861.2,574.5 884.4,567.7 907.5,563.0" fill="none" stroke="#3f89d0" stroke-width="2" stroke-linejoin="round"/>
<polyline points="560.0,622.0 583.2,622.0 606.3,622.0 629.5,622.0 652.7,622.0 675.9,622.0 699.0,622.0 722.2,622.0 745.4,622.0 768.5,622.0 791.7,622.0 814.9,538.0 838.0,538.0 861.2,538.0 884.4,538.0 907.5,538.0" fill="none" stroke="#44bcb8" stroke-width="2" stroke-linejoin="round"/>
<polyline points="560.0,622.0 583.2,622.0 606.3,622.0 629.5,622.0 652.7,622.0 675.9,622.0 699.0,622.0 722.2,622.0 745.4,622.0 768.5,622.0 791.7,622.0 814.9,618.5 838.0,611.4 861.2,606.4 884.4,606.4 907.5,606.4" fill="none" stroke="#fcc54a" stroke-width="2" stroke-linejoin="round"/>
<polyline points="560.0,622.0 583.2,622.0 606.3,622.0 629.5,622.0 652.7,622.0 675.9,622.0 699.0,622.0 722.2,622.0 745.4,622.0 768.5,622.0 791.7,622.0 814.9,476.0 838.0,476.0 861.2,476.0 884.4,476.0 907.5,476.0" fill="none" stroke="#f1637f" stroke-width="2" stroke-linejoin="round"/>
<circle cx="516.6" cy="419.5" r="7.3" fill="#3a9ee9"/>
<text x="531.3" y="424.5" text-anchor="start" font-size="15.6" fill="#353535" >instance_jvm_memory_heap</text>
<circle cx="516.6" cy="446.8" r="7.3" fill="#44bcb8"/>
<text x="531.3" y="451.8" text-anchor="start" font-size="15.6" fill="#353535" >instance_jvm_memory_heap_max</text>
<circle cx="516.6" cy="474.1" r="7.3" fill="#fcc54a"/>
<text x="531.3" y="479.1" text-anchor="start" font-size="15.6" fill="#353535" >instance_jvm_memory_noheap</text>
<circle cx="516.6" cy="501.4" r="7.3" fill="#f1637f"/>
<text x="531.3" y="506.4" text-anchor="start" font-size="15.6" fill="#353535" >instance_jvm_memory_noheap_max</text>
<line x1="1012.6" y1="622.0" x2="1380" y2="622.0" stroke="#eeeeee" stroke-dasharray="5.5 4.5"/>
<line x1="1012.6" y1="601.0" x2="1380" y2="601.0" stroke="#eeeeee" stroke-dasharray="5.5 4.5"/>
<line x1="1012.6" y1="580.0" x2="1380" y2="580.0" stroke="#eeeeee" stroke-dasharray="5.5 4.5"/>
<line x1="1012.6" y1="559.0" x2="1380" y2="559.0" stroke="#eeeeee" stroke-dasharray="5.5 4.5"/>
<line x1="1012.6" y1="538.0" x2="1380" y2="538.0" stroke="#eeeeee" stroke-dasharray="5.5 4.5"/>
<line x1="1012.6" y1="517.0" x2="1380" y2="517.0" stroke="#eeeeee" stroke-dasharray="5.5 4.5"/>
<line x1="1012.6" y1="496.0" x2="1380" y2="496.0" stroke="#eeeeee" stroke-dasharray="5.5 4.5"/>
<line x1="1012.6" y1="475.0" x2="1380" y2="475.0" stroke="#eeeeee" stroke-dasharray="5.5 4.5"/>
<text x="1002.2" y="625.7" text-anchor="end" font-size="14" fill="#9ea3ab" >0</text>
<text x="1002.2" y="604.7" text-anchor="end" font-size="14" fill="#9ea3ab" >300</text>
<text x="1002.2" y="583.7" text-anchor="end" font-size="14" fill="#9ea3ab" >600</text>
<text x="1002.2" y="562.7" text-anchor="end" font-size="14" fill="#9ea3ab" >900</text>
<text x="1002.2" y="541.7" text-anchor="end" font-size="14" fill="#9ea3ab" >1,200</text>
<text x="1002.2" y="520.7" text-anchor="end" font-size="14" fill="#9ea3ab" >1,500</text>
<text x="1002.2" y="499.7" text-anchor="end" font-size="14" fill="#9ea3ab" >1,800</text>
<text x="1002.2" y="478.7" text-anchor="end" font-size="14" fill="#9ea3ab" >2,100</text>
<text x="1025.0" y="642.5" text-anchor="middle" font-size="14" fill="#9ea3ab" >15:36</text>
<text x="1025.0" y="655.0" text-anchor="middle" font-size="14" fill="#9ea3ab" >09-29</text>
<line x1="1025.0" y1="623" x2="1025.0" y2="627" stroke="#dcdcdc"/>
<text x="1094.5" y="642.5" text-anchor="middle" font-size="14" fill="#9ea3ab" >15:39</text>
<text x="1094.5" y="655.0" text-anchor="middle" font-size="14" fill="#9ea3ab" >09-29</text>
<line x1="1094.5" y1="623" x2="1094.5" y2="627" stroke="#dcdcdc"/>
<text x="1164.0" y="642.5" text-anchor="middle" font-size="14" fill="#9ea3ab" >15:42</text>
<text x="1164.0" y="655.0" text-anchor="middle" font-size="14" fill="#9ea3ab" >09-29</text>
<line x1="1164.0" y1="623" x2="1164.0" y2="627" stroke="#dcdcdc"/>
<text x="1233.5" y="642.5" text-anchor="middle" font-size="14" fill="#9ea3ab" >15:45</text>
<text x="1233.5" y="655.0" text-anchor="middle" font-size="14" fill="#9ea3ab" >09-29</text>
<line x1="1233.5" y1="623" x2="1233.5" y2="627" stroke="#dcdcdc"/>
<text x="1303.0" y="642.5" text-anchor="middle" font-size="14" fill="#9ea3ab" >15:48</text>
<text x="1303.0" y="655.0" text-anchor="middle" font-size="14" fill="#9ea3ab" >09-29</text>
<line x1="1303.0" y1="623" x2="1303.0" y2="627" stroke="#dcdcdc"/>
<text x="1372.5" y="642.5" text-anchor="middle" font-size="14" fill="#9ea3ab" >15:51</text>
<text x="1372.5" y="655.0" text-anchor="middle" font-size="14" fill="#9ea3ab" >09-29</text>
<line x1="1372.5" y1="623" x2="1372.5" y2="627" stroke="#dcdcdc"/>
<polyline points="1025.0,622.0 1048.2,622.0 1071.3,622.0 1094.5,622.0 1117.7,622.0 1140.8,622.0 1164.0,622.0 1187.2,622.0 1210.4,622.0 1233.5,622.0 1256.7,622.0 1279.9,578.6 1303.0,485.4 1326.2,611.4 1349.4,622.0 1372.5,622.0" fill="none" stroke="#f1637f" stroke-width="2" stroke-linejoin="round"/>
<polyline points="1025.0,622.0 1048.2,622.0 1071.3,622.0 1094.5,622.0 1117.7,622.0 1140.8,622.0 1164.0,622.0 1187.2,622.0 1210.4,622.0 1233.5,622.0 1256.7,622.0 1279.9,622.0 1303.0,622.0 1326.2,622.0 1349.4,622.0 1372.5,622.0" fill="none" stroke="#a2abe6" stroke-width="2" stroke-linejoin="round"/>
<circle cx="981.6" cy="419.5" r="7.3" fill="#f1637f"/>
<text x="996.3" y="424.5" text-anchor="start" font-size="15.6" fill="#353535" >instance_jvm_young_gc_time</text>
<circle cx="981.6" cy="446.8" r="7.3" fill="#a2abe6"/>
<text x="996.3" y="451.8" text-anchor="start" font-size="15.6" fill="#353535" >instance_jvm_old_gc_time</text>
<line x1="1458" y1="622.0" x2="1847" y2="622.0" stroke="#eeeeee" stroke-dasharray="5.5 4.5"/>
<line x1="1458" y1="588.8" x2="1847" y2="588.8" stroke="#eeeeee" stroke-dasharray="5.5 4.5"/>
<line x1="1458" y1="555.6" x2="1847" y2="555.6" stroke="#eeeeee" stroke-dasharray="5.5 4.5"/>
<line x1="1458" y1="522.4" x2="1847" y2="522.4" stroke="#eeeeee" stroke-dasharray="5.5 4.5"/>
<line x1="1458" y1="489.2" x2="1847" y2="489.2" stroke="#eeeeee" stroke-dasharray="5.5 4.5"/>
<line x1="1458" y1="456.0" x2="1847" y2="456.0" stroke="#eeeeee" stroke-dasharray="5.5 4.5"/>
<text x="1450.0" y="625.7" text-anchor="end" font-size="14" fill="#9ea3ab" >0</text>
<text x="1450.0" y="592.5" text-anchor="end" font-size="14" fill="#9ea3ab" >10</text>
<text x="1450.0" y="559.3" text-anchor="end" font-size="14" fill="#9ea3ab" >20</text>
<text x="1450.0" y="526.1" text-anchor="end" font-size="14" fill="#9ea3ab" >30</text>
<text x="1450.0" y="492.9" text-anchor="end" font-size="14" fill="#9ea3ab" >40</text>
<text x="1450.0" y="459.7" text-anchor="end" font-size="14" fill="#9ea3ab" >50</text>
<text x="1472.7" y="642.5" text-anchor="middle" font-size="14" fill="#9ea3ab" >15:36</text>
<text x="1472.7" y="655.0" text-anchor="middle" font-size="14" fill="#9ea3ab" >09-29</text>
<line x1="1472.7" y1="623" x2="1472.7" y2="627" stroke="#dcdcdc"/>
<text x="1545.5" y="642.5" text-anchor="middle" font-size="14" fill="#9ea3ab" >15:39</text>
<text x="1545.5" y="655.0" text-anchor="middle" font-size="14" fill="#9ea3ab" >09-29</text>
<line x1="1545.5" y1="623" x2="1545.5" y2="627" stroke="#dcdcdc"/>
<text x="1618.3" y="642.5" text-anchor="middle" font-size="14" fill="#9ea3ab" >15:42</text>
<text x="1618.3" y="655.0" text-anchor="middle" font-size="14" fill="#9ea3ab" >09-29</text>
<line x1="1618.3" y1="623" x2="1618.3" y2="627" stroke="#dcdcdc"/>
<text x="1691.1" y="642.5" text-anchor="middle" font-size="14" fill="#9ea3ab" >15:45</text>
<text x="1691.1" y="655.0" text-anchor="middle" font-size="14" fill="#9ea3ab" >09-29</text>
<line x1="1691.1" y1="623" x2="1691.1" y2="627" stroke="#dcdcdc"/>
<text x="1763.9" y="642.5" text-anchor="middle" font-size="14" fill="#9ea3ab" >15:48</text>
<text x="1763.9" y="655.0" text-anchor="middle" font-size="14" fill="#9ea3ab" >09-29</text>
<line x1="1763.9" y1="623" x2="1763.9" y2="627" stroke="#dcdcdc"/>
<text x="1836.8" y="642.5" text-anchor="middle" font-size="14" fill="#9ea3ab" >15:51</text>
<text x="1836.8" y="655.0" text-anchor="middle" font-size="14" fill="#9ea3ab" >09-29</text>
<line x1="1836.8" y1="623" x2="1836.8" y2="627" stroke="#dcdcdc"/>
<rect x="1733.4" y="559.3" width="12.6" height="62.7" fill="#3a9ee9"/>
<rect x="1757.6" y="486.1" width="12.6" height="135.9" fill="#3a9ee9"/>
<rect x="1781.9" y="612.5" width="12.6" height="9.5" fill="#3a9ee9"/>
<circle cx="1447.6" cy="419.5" r="7.3" fill="#3a9ee9"/>
<text x="1462.3" y="424.5" text-anchor="start" font-size="15.6" fill="#353535" >instance_jvm_young_gc_count</text>
<circle cx="1447.6" cy="446.8" r="7.3" fill="#44bcb8"/>
<text x="1462.3" y="451.8" text-anchor="start" font-size="15.6" fill="#353535" >instance_jvm_old_gc_count</text>
<rect x="25" y="676" width="452" height="35" fill="#f2f3f8"/>
<text x="37.5" y="698.6" text-anchor="start" font-size="16.3" fill="#8e939e" >JVM Thread Count (Java Service)</text>
<g transform="translate(449,686)"><path d="M3.2 6.2V3.8a2.8 2.8 0 0 1 5.6 0V6.2" stroke="#8e939e" stroke-width="1.9" fill="none"/><rect x="1" y="6.1" width="10" height="6.8" rx="1.6" stroke="#8e939e" stroke-width="1.9" fill="none"/></g>
<rect x="490" y="676" width="452" height="35" fill="#f2f3f8"/>
<text x="502.5" y="698.6" text-anchor="start" font-size="16.3" fill="#8e939e" >CLR CPU (.NET Service) ( % )</text>
<g transform="translate(914,686)"><path d="M3.2 6.2V3.8a2.8 2.8 0 0 1 5.6 0V6.2" stroke="#8e939e" stroke-width="1.9" fill="none"/><rect x="1" y="6.1" width="10" height="6.8" rx="1.6" stroke="#8e939e" stroke-width="1.9" fill="none"/></g>
<rect x="955" y="676" width="452" height="35" fill="#f2f3f8"/>
<text x="967.5" y="698.6" text-anchor="start" font-size="16.3" fill="#8e939e" >CLR GC (.NET Service)</text>
<g transform="translate(1379,686)"><path d="M3.2 6.2V3.8a2.8 2.8 0 0 1 5.6 0V6.2" stroke="#8e939e" stroke-width="1.9" fill="none"/><rect x="1" y="6.1" width="10" height="6.8" rx="1.6" stroke="#8e939e" stroke-width="1.9" fill="none"/></g>
<rect x="1421" y="676" width="452" height="35" fill="#f2f3f8"/>
<text x="1433.5" y="698.6" text-anchor="start" font-size="16.3" fill="#8e939e" >CLR Heap Memory (.NET Service) ( MB )</text>
<g transform="translate(1845,686)"><path d="M3.2 6.2V3.8a2.8 2.8 0 0 1 5.6 0V6.2" stroke="#8e939e" stroke-width="1.9" fill="none"/><rect x="1" y="6.1" width="10" height="6.8" rx="1.6" stroke="#8e939e" stroke-width="1.9" fill="none"/></g>
<line x1="71.7" y1="933.0" x2="448.2" y2="933.0" stroke="#eeeeee" stroke-dasharray="5.5 4.5"/>
<line x1="71.7" y1="904.0" x2="448.2" y2="904.0" stroke="#eeeeee" stroke-dasharray="5.5 4.5"/>
<line x1="71.7" y1="874.9" x2="448.2" y2="874.9" stroke="#eeeeee" stroke-dasharray="5.5 4.5"/>
<line x1="71.7" y1="845.9" x2="448.2" y2="845.9" stroke="#eeeeee" stroke-dasharray="5.5 4.5"/>
<line x1="71.7" y1="816.8" x2="448.2" y2="816.8" stroke="#eeeeee" stroke-dasharray="5.5 4.5"/>
<line x1="71.7" y1="787.8" x2="448.2" y2="787.8" stroke="#eeeeee" stroke-dasharray="5.5 4.5"/>
<text x="62.0" y="936.7" text-anchor="end" font-size="14" fill="#9ea3ab" >0</text>
<text x="62.0" y="907.7" text-anchor="end" font-size="14" fill="#9ea3ab" >20</text>
<text x="62.0" y="878.6" text-anchor="end" font-size="14" fill="#9ea3ab" >40</text>
<text x="62.0" y="849.6" text-anchor="end" font-size="14" fill="#9ea3ab" >60</text>
<text x="62.0" y="820.5" text-anchor="end" font-size="14" fill="#9ea3ab" >80</text>
<text x="62.0" y="791.5" text-anchor="end" font-size="14" fill="#9ea3ab" >100</text>
<polyline points="345.5,933.0 369.2,874.9 393.0,817.0 416.7,811.0 440.5,809.7" fill="none" stroke="#3f89d0" stroke-width="2" stroke-linejoin="round"/>
<polyline points="345.5,933.0 369.2,880.7 393.0,826.0 416.7,820.2 440.5,820.2" fill="none" stroke="#44bcb8" stroke-width="2" stroke-linejoin="round"/>
<polyline points="345.5,933.0 369.2,874.2 393.0,815.5 416.7,809.7 440.5,809.7" fill="none" stroke="#fcc54a" stroke-width="2" stroke-linejoin="round"/>
<circle cx="51.5" cy="732.0" r="7.3" fill="#3a9ee9"/>
<text x="66.2" y="737.0" text-anchor="start" font-size="15.6" fill="#353535" >instance_jvm_thread_live_count</text>
<circle cx="51.5" cy="759.3" r="7.3" fill="#44bcb8"/>
<text x="66.2" y="764.3" text-anchor="start" font-size="15.6" fill="#353535" >instance_jvm_thread_daemon_count</text>
<circle cx="51.5" cy="786.6" r="7.3" fill="#fcc54a"/>
<text x="66.2" y="791.6" text-anchor="start" font-size="15.6" fill="#353535" >instance_jvm_thread_peak_count</text>
<line x1="531" y1="738.1" x2="917" y2="738.1" stroke="#eeeeee" stroke-dasharray="5.5 4.5"/>
<line x1="531" y1="777.6" x2="917" y2="777.6" stroke="#eeeeee" stroke-dasharray="5.5 4.5"/>
<line x1="531" y1="817.1" x2="917" y2="817.1" stroke="#eeeeee" stroke-dasharray="5.5 4.5"/>
<line x1="531" y1="856.6" x2="917" y2="856.6" stroke="#eeeeee" stroke-dasharray="5.5 4.5"/>
<text x="522.0" y="741.8" text-anchor="end" font-size="14" fill="#9ea3ab" >1</text>
<text x="522.0" y="781.3" text-anchor="end" font-size="14" fill="#9ea3ab" >0.8</text>
<text x="522.0" y="820.8" text-anchor="end" font-size="14" fill="#9ea3ab" >0.6</text>
<text x="522.0" y="860.3" text-anchor="end" font-size="14" fill="#9ea3ab" >0.4</text>
<line x1="996.5" y1="769.1" x2="1383" y2="769.1" stroke="#eeeeee" stroke-dasharray="5.5 4.5"/>
<line x1="996.5" y1="802.5" x2="1383" y2="802.5" stroke="#eeeeee" stroke-dasharray="5.5 4.5"/>
<line x1="996.5" y1="835.9" x2="1383" y2="835.9" stroke="#eeeeee" stroke-dasharray="5.5 4.5"/>
<line x1="996.5" y1="869.3" x2="1383" y2="869.3" stroke="#eeeeee" stroke-dasharray="5.5 4.5"/>
<text x="987.0" y="772.8" text-anchor="end" font-size="14" fill="#9ea3ab" >1</text>
<text x="987.0" y="806.2" text-anchor="end" font-size="14" fill="#9ea3ab" >0.8</text>
<text x="987.0" y="839.6" text-anchor="end" font-size="14" fill="#9ea3ab" >0.6</text>
<text x="987.0" y="873.0" text-anchor="end" font-size="14" fill="#9ea3ab" >0.4</text>
<circle cx="981.7" cy="732.3" r="7.3" fill="#3a9ee9"/>
<text x="996.4" y="737.3" text-anchor="start" font-size="15.6" fill="#353535" >instance_clr_gen0_collect_count</text>
<circle cx="981.7" cy="759.6" r="7.3" fill="#44bcb8"/>
<text x="996.4" y="764.6" text-anchor="start" font-size="15.6" fill="#353535" >instance_clr_gen1_collect_count</text>
<circle cx="981.7" cy="786.9" r="7.3" fill="#fcc54a"/>
<text x="996.4" y="791.9" text-anchor="start" font-size="15.6" fill="#353535" >instance_clr_gen2_collect_count</text>
<line x1="1464" y1="738.1" x2="1848" y2="738.1" stroke="#eeeeee" stroke-dasharray="5.5 4.5"/>
<line x1="1464" y1="777.6" x2="1848" y2="777.6" stroke="#eeeeee" stroke-dasharray="5.5 4.5"/>
<line x1="1464" y1="817.1" x2="1848" y2="817.1" stroke="#eeeeee" stroke-dasharray="5.5 4.5"/>
<line x1="1464" y1="856.6" x2="1848" y2="856.6" stroke="#eeeeee" stroke-dasharray="5.5 4.5"/>
<text x="1452.0" y="741.8" text-anchor="end" font-size="14" fill="#9ea3ab" >1</text>
<text x="1452.0" y="781.3" text-anchor="end" font-size="14" fill="#9ea3ab" >0.8</text>
<text x="1452.0" y="820.8" text-anchor="end" font-size="14" fill="#9ea3ab" >0.6</text>
<text x="1452.0" y="860.3" text-anchor="end" font-size="14" fill="#9ea3ab" >0.4</text></svg><!--/CHARTS-->
<div id="foot"></div>
<div class="a" style="left:323px;top:914px;width:45px;height:1px;background:#e9a878"></div>
<div class="a" style="left:1353px;top:888px;color:#4d4f55;font-size:14px;line-height:16px">2020-09-29 15:36:03 ~ 2020-09-29 15:51:03</div>
<div class="a" style="left:1709px;top:887px;color:#4d4f55;font-size:15px;line-height:16px">中</div>
<div class="a" style="left:1742px;top:887px;color:#4d4f55;font-size:15px;line-height:16px">服务器时区 UTC + 0</div>
<div class="a" style="left:1900px;top:246px;width:20px;height:632px;background:#f0f0f0"></div>
<div class="a" style="left:1901px;top:313px;width:17px;height:319px;background:#c1c1c1"></div>
<svg class="a" style="left:1904px;top:252px" width="11" height="8" viewBox="0 0 11 8"><path d="M0.5 7L5.5 1.5L10.5 7Z" fill="#505050"/></svg>
<svg class="a" style="left:1904px;top:864px" width="11" height="8" viewBox="0 0 11 8"><path d="M0.5 1L5.5 6.5L10.5 1Z" fill="#505050"/></svg>
<div class="a" style="left:1540px;top:833px;color:#0a0a0a;font-size:49px;line-height:60px;font-weight:normal;letter-spacing:1px;-webkit-text-stroke:0.6px #0a0a0a;text-shadow:-1px -1px 0 #fff,1px -1px 0 #fff,-1px 1px 0 #fff,1px 1px 0 #fff">头条</div>
<div class="a" style="left:1648px;top:833px;color:#0a0a0a;font-size:50px;line-height:60px;-webkit-text-stroke:0.8px #0a0a0a;text-shadow:-1px -1px 0 #fff,1px -1px 0 #fff,-1px 1px 0 #fff,1px 1px 0 #fff">@</div>
<div class="a" style="left:1697px;top:833px;color:#0a0a0a;font-size:49px;line-height:60px;font-weight:normal;letter-spacing:0.6px;-webkit-text-stroke:0.6px #0a0a0a;text-shadow:-1px -1px 0 #fff,1px -1px 0 #fff,-1px 1px 0 #fff,1px 1px 0 #fff">极客运维</div>
</body></html>
